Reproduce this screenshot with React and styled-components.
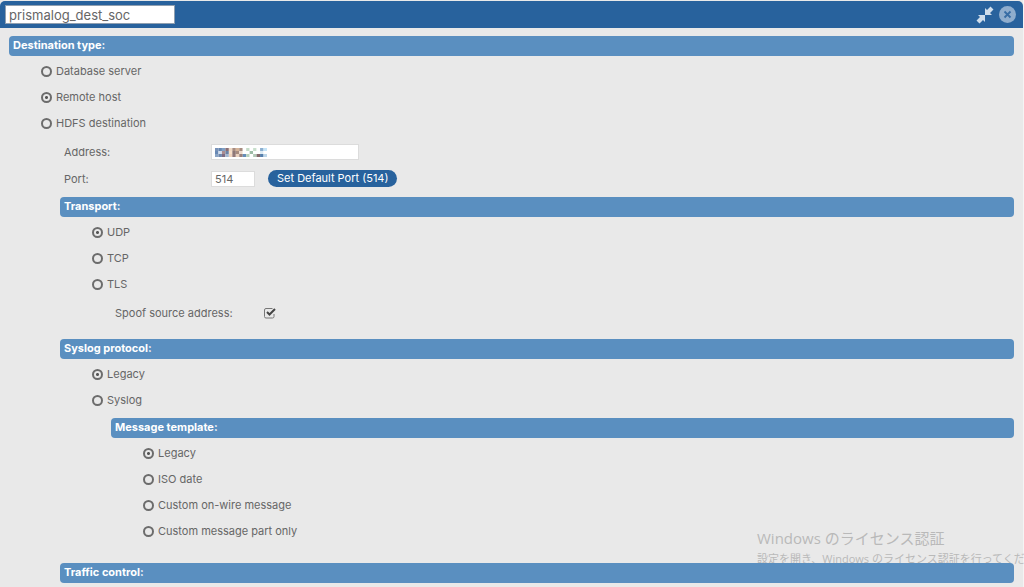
import { useState } from "react";
import styled, { createGlobalStyle, css } from "styled-components";

const GlobalStyle = createGlobalStyle`
  * {
    box-sizing: border-box;
  }
  body {
    margin: 0;
    background: #f4f4f4;
    color: #666;
    font-family: Inter, "Noto Sans CJK JP", sans-serif;
    font-size: 11px;
  }
  input, button {
    font-family: inherit;
    color: inherit;
  }
`;

const Panel = styled.main`
  position: relative;
  min-height: 100vh;
  padding-top: 1px;
  margin-right: 1px;
  background: #e9e9e9;
`;

const TitleBar = styled.header`
  display: flex;
  align-items: center;
  justify-content: space-between;
  height: 27px;
  padding: 0 7px 0 5px;
  border-radius: 5px 5px 0 0;
  background: #28629d;
`;

const TextInput = styled.input`
  width: ${(props) => props.$width}px;
  height: 16px;
  padding: 0 3px;
  border: 1px solid #dcdcdc;
  background: #fff;
  font-size: 11px;
  outline: 0;
`;

const TitleInput = styled(TextInput)`
  height: 19px;
  border-color: #8f9fb0;
  font-size: 13px;
`;

const Tools = styled.div`
  display: flex;
  align-items: center;
  gap: 5px;
`;

const IconButton = styled.button`
  display: flex;
  padding: 0;
  border: 0;
  background: transparent;
  cursor: pointer;
`;

const Content = styled.div`
  padding: 8px 9px 0;
`;

const SectionTitle = styled.h2`
  position: relative;
  z-index: 1;
  height: 20px;
  margin: 0;
  padding: 0 4px;
  border-radius: 4px;
  background: #5a8fc0;
  color: #fff;
  font-size: 11px;
  font-weight: 700;
  line-height: 19px;
`;

const Nested = styled.section`
  margin-left: 51px;
  margin-top: ${(props) => props.$top}px;
`;

const Options = styled.div`
  padding: 2px 0 2px 32px;
`;

const Option = styled.label`
  display: flex;
  align-items: center;
  gap: 4px;
  height: 26px;
`;

const Radio = styled.input`
  appearance: none;
  width: 11px;
  height: 11px;
  margin: 0;
  border: 2px solid #6c6c6c;
  border-radius: 50%;
  ${(props) =>
    props.checked &&
    css`
      background: radial-gradient(circle, #555 1px, transparent 2px);
    `}
`;

const Field = styled.div`
  display: flex;
  align-items: center;
  height: 27px;
  padding-left: 55px;
  label {
    width: ${(props) => props.$label || 147}px;
  }
  button {
    margin-left: 13px;
  }
`;

const AddressBox = styled.div`
  position: relative;
  display: flex;
`;

const Mosaic = styled.svg`
  position: absolute;
  left: 4px;
  top: 4px;
`;

const PillButton = styled.button`
  height: 17px;
  padding: 0 9px;
  border: 0;
  border-radius: 9px;
  background: #28629d;
  color: #fff;
  font-size: 11px;
  line-height: 17px;
`;

const CheckBox = styled.span`
  position: relative;
  display: flex;
  input {
    appearance: none;
    width: 12px;
    height: 12px;
    margin: 0;
  }
  svg {
    position: absolute;
    inset: 0;
    pointer-events: none;
  }
`;

const Watermark = styled.aside`
  position: absolute;
  left: 757px;
  top: 525px;
  color: #b9b9b9;
  font-family: "Open Sans", "Noto Sans CJK JP", sans-serif;
  white-space: nowrap;
  pointer-events: none;
  p {
    margin: 0;
    font-size: 11px;
    line-height: 16px;
  }
  p:first-child {
    font-size: 15px;
    line-height: 26px;
  }
`;

const blocks = [
  ["#7892b8", "#6687b2", "#81a0c4", "#8b6f75", "#f0d9c4", "#a78c80", "#d5b398", "#a78c80", "#ffffff", "#c4dbc7", "#ffffff", "#c8dfcc", "#ffffff", "#8cafd0", "#c4e4f7"],
  ["#6889b5", "#d2dded", "#ab8c90", "#6c83a6", "#f8dfc8", "#8d7776", "#a78c80", "#ecd9cb", "#ffffff", "#ffffff", "#9dbda6", "#ffffff", "#ffffff", "#ddebf4", "#ffffff"],
  ["#89a3c4", "#7089ae", "#806d83", "#a4b8d1", "#efd3bd", "#92797a", "#ead2bf", "#9a807b", "#658db9", "#b7d0ba", "#ffffff", "#b2c8b6", "#83676a", "#567fac", "#bdd6e8"],
];

function RadioGroup({ name, options, initial }) {
  const [selected, setSelected] = useState(initial);
  return (
    <Options role="radiogroup" aria-label={name}>
      {options.map((option) => (
        <Option key={option}>
          <Radio
            type="radio"
            name={name}
            checked={selected === option}
            onChange={() => setSelected(option)}
          />
          {option}
        </Option>
      ))}
    </Options>
  );
}

export default function App() {
  const [title, setTitle] = useState("prismalog_dest_soc");
  const [address, setAddress] = useState("");
  const [port, setPort] = useState("514");
  const [spoof, setSpoof] = useState(true);

  return (
    <Panel>
      <GlobalStyle />
      <TitleBar>
        <TitleInput
          $width={170}
          aria-label="Destination name"
          value={title}
          onChange={(ev) => setTitle(ev.target.value)}
        />
        <Tools>
          <IconButton aria-label="Collapse">
            <svg width="18" height="18" viewBox="0 0 18 18" fill="#d0deec">
              <path d="M9 2l2 2 3.500-3.500 3 3L14 7l2 2H9zM9 16l-2-2-3.500 3.500-3-3L4 11 2 9h7z" />
            </svg>
          </IconButton>
          <IconButton aria-label="Close">
            <svg width="17" height="17" viewBox="0 0 17 17">
              <circle cx="8.5" cy="8.5" r="8.5" fill="#8fadcd" />
              <path d="M5.500 5.500l6 6M11.500 5.500l-6 6" stroke="#376ca4" strokeWidth="1.8" />
            </svg>
          </IconButton>
        </Tools>
      </TitleBar>
      <Content>
        <SectionTitle>Destination type:</SectionTitle>
        <RadioGroup
          name="Destination type"
          options={["Database server", "Remote host", "HDFS destination"]}
          initial="Remote host"
        />
        <Field>
          <label htmlFor="address">Address:</label>
          <AddressBox>
            <TextInput
              id="address"
              $width={148}
              value={address}
              onChange={(ev) => setAddress(ev.target.value)}
            />
            {address === "" && (
              <Mosaic width="52" height="9" viewBox="0 0 15 3" preserveAspectRatio="none">
                {blocks.map((row, y) =>
                  row.map((color, x) => (
                    <rect key={x + "-" + y} x={x} y={y} width="1" height="1" fill={color} />
                  ))
                )}
              </Mosaic>
            )}
          </AddressBox>
        </Field>
        <Field>
          <label htmlFor="port">Port:</label>
          <TextInput
            id="port"
            $width={44}
            value={port}
            onChange={(ev) => setPort(ev.target.value)}
          />
          <PillButton onClick={() => setPort("514")}>Set Default Port (514)</PillButton>
        </Field>
        <Nested $top={5}>
          <SectionTitle>Transport:</SectionTitle>
          <RadioGroup name="Transport" options={["UDP", "TCP", "TLS"]} initial="UDP" />
          <Field $label={149}>
            <label htmlFor="spoof">Spoof source address:</label>
            <CheckBox>
              <input
                id="spoof"
                type="checkbox"
                checked={spoof}
                onChange={(ev) => setSpoof(ev.target.checked)}
              />
              <svg width="12" height="12" viewBox="0 0 12 12" fill="none">
                <path d="M10 7v2.500q0 1.500-1.500 1.500h-6.500q-1.500 0-1.500-1.500v-6.500q0-1.500 1.500-1.500h6.500" stroke="#777" />
                {spoof && <path d="M3 5l2.500 2.500L11 2" stroke="#444" strokeWidth="2" />}
              </svg>
            </CheckBox>
          </Field>
        </Nested>
        <Nested $top={13}>
          <SectionTitle>Syslog protocol:</SectionTitle>
          <RadioGroup name="Syslog protocol" options={["Legacy", "Syslog"]} initial="Legacy" />
          <Nested $top={3}>
            <SectionTitle>Message template:</SectionTitle>
            <RadioGroup
              name="Message template"
              options={["Legacy", "ISO date", "Custom on-wire message", "Custom message part only"]}
              initial="Legacy"
            />
          </Nested>
        </Nested>
        <Nested $top={17}>
          <SectionTitle>Traffic control:</SectionTitle>
        </Nested>
      </Content>
      <Watermark>
        <p>Windows のライセンス認証</p>
        <p>設定を開き、Windows のライセンス認証を行ってくだ</p>
      </Watermark>
    </Panel>
  );
}
